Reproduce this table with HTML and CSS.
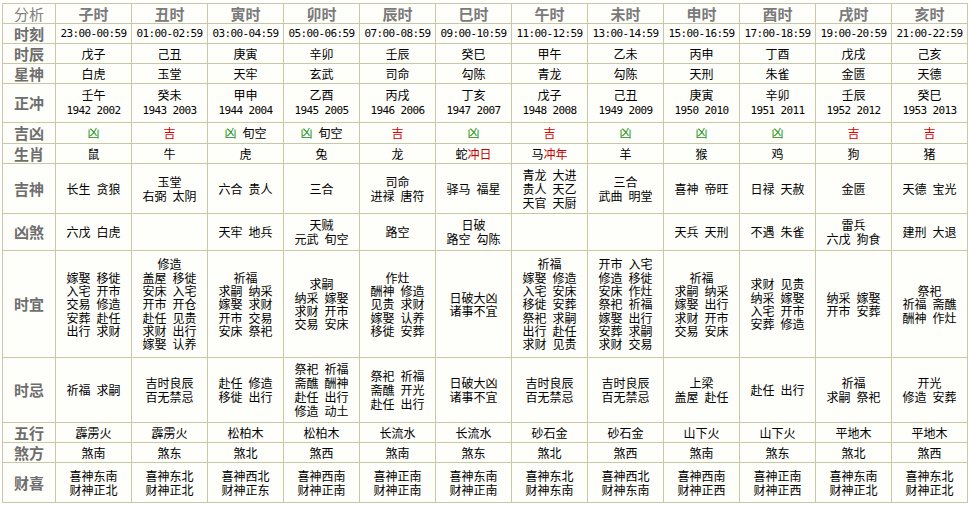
FILE: index.html
```html
<!DOCTYPE html>
<html lang="zh">
<head>
<meta charset="utf-8">
<title>时辰分析</title>
<link rel="stylesheet" href="styles.css">
</head>
<body>
<table class="almanac">
<colgroup><col class="lab"><col class="c"><col class="c"><col class="c"><col class="c"><col class="c"><col class="c"><col class="c"><col class="c"><col class="c"><col class="c"><col class="c"><col class="c"></colgroup>
<tr class="r20 head">
<td class="corner">分析</td><td>子时</td><td>丑时</td><td>寅时</td><td>卯时</td><td>辰时</td><td>巳时</td><td>午时</td><td>未时</td><td>申时</td><td>酉时</td><td>戌时</td><td>亥时</td>
</tr>
<tr class="r20 mono">
<td class="label">时刻</td><td>23:00-00:59</td><td>01:00-02:59</td><td>03:00-04:59</td><td>05:00-06:59</td><td>07:00-08:59</td><td>09:00-10:59</td><td>11:00-12:59</td><td>13:00-14:59</td><td>15:00-16:59</td><td>17:00-18:59</td><td>19:00-20:59</td><td>21:00-22:59</td>
</tr>
<tr class="r20">
<td class="label">时辰</td><td>戊子</td><td>己丑</td><td>庚寅</td><td>辛卯</td><td>壬辰</td><td>癸巳</td><td>甲午</td><td>乙未</td><td>丙申</td><td>丁酉</td><td>戊戌</td><td>己亥</td>
</tr>
<tr class="r20">
<td class="label">星神</td><td>白虎</td><td>玉堂</td><td>天牢</td><td>玄武</td><td>司命</td><td>勾陈</td><td>青龙</td><td>勾陈</td><td>天刑</td><td>朱雀</td><td>金匮</td><td>天德</td>
</tr>
<tr class="r39">
<td class="label">正冲</td>
<td>壬午<br><span class="num">1942 2002</span></td>
<td>癸未<br><span class="num">1943 2003</span></td>
<td>甲申<br><span class="num">1944 2004</span></td>
<td>乙酉<br><span class="num">1945 2005</span></td>
<td>丙戌<br><span class="num">1946 2006</span></td>
<td>丁亥<br><span class="num">1947 2007</span></td>
<td>戊子<br><span class="num">1948 2008</span></td>
<td>己丑<br><span class="num">1949 2009</span></td>
<td>庚寅<br><span class="num">1950 2010</span></td>
<td>辛卯<br><span class="num">1951 2011</span></td>
<td>壬辰<br><span class="num">1952 2012</span></td>
<td>癸巳<br><span class="num">1953 2013</span></td>
</tr>
<tr class="r21">
<td class="label">吉凶</td>
<td><span class="xiong">凶</span></td>
<td><span class="ji">吉</span></td>
<td><span class="xiong">凶</span> 旬空</td>
<td><span class="xiong">凶</span> 旬空</td>
<td><span class="ji">吉</span></td>
<td><span class="xiong">凶</span></td>
<td><span class="ji">吉</span></td>
<td><span class="xiong">凶</span></td>
<td><span class="xiong">凶</span></td>
<td><span class="xiong">凶</span></td>
<td><span class="ji">吉</span></td>
<td><span class="ji">吉</span></td>
</tr>
<tr class="r20">
<td class="label">生肖</td><td>鼠</td><td>牛</td><td>虎</td><td>兔</td><td>龙</td><td>蛇<span class="chong">冲日</span></td><td>马<span class="chong">冲年</span></td><td>羊</td><td>猴</td><td>鸡</td><td>狗</td><td>猪</td>
</tr>
<tr class="r50">
<td class="label">吉神</td>
<td>长生 贪狼</td>
<td>玉堂<br>右弼 太阴</td>
<td>六合 贵人</td>
<td>三合</td>
<td>司命<br>进禄 唐符</td>
<td>驿马 福星</td>
<td>青龙 大进<br>贵人 天乙<br>天官 天厨</td>
<td>三合<br>武曲 明堂</td>
<td>喜神 帝旺</td>
<td>日禄 天赦</td>
<td>金匮</td>
<td>天德 宝光</td>
</tr>
<tr class="r37">
<td class="label">凶煞</td>
<td>六戊 白虎</td>
<td></td>
<td>天牢 地兵</td>
<td>天贼<br>元武 旬空</td>
<td>路空</td>
<td>日破<br>路空 勾陈</td>
<td></td>
<td></td>
<td>天兵 天刑</td>
<td>不遇 朱雀</td>
<td>雷兵<br>六戊 狗食</td>
<td>建刑 大退</td>
</tr>
<tr class="r107 dense">
<td class="label">时宜</td>
<td>嫁娶 移徙<br>入宅 开市<br>交易 修造<br>安葬 赴任<br>出行 求财</td>
<td>修造<br>盖屋 移徙<br>安床 入宅<br>开市 开仓<br>赴任 见贵<br>求财 出行<br>嫁娶 认养</td>
<td>祈福<br>求嗣 纳采<br>嫁娶 求财<br>开市 交易<br>安床 祭祀</td>
<td>求嗣<br>纳采 嫁娶<br>求财 开市<br>交易 安床</td>
<td>作灶<br>酬神 修造<br>见贵 求财<br>嫁娶 认养<br>移徙 安葬</td>
<td>日破大凶<br>诸事不宜</td>
<td>祈福<br>嫁娶 修造<br>入宅 安床<br>移徙 安葬<br>祭祀 求嗣<br>出行 赴任<br>求财 见贵</td>
<td>开市 入宅<br>修造 移徙<br>安床 作灶<br>祭祀 祈福<br>嫁娶 出行<br>安葬 求嗣<br>求财 交易</td>
<td>祈福<br>求嗣 纳采<br>嫁娶 出行<br>求财 开市<br>交易 安床</td>
<td>求财 见贵<br>纳采 嫁娶<br>入宅 开市<br>安葬 修造</td>
<td>纳采 嫁娶<br>开市 安葬</td>
<td>祭祀<br>祈福 斋醮<br>酬神 作灶</td>
</tr>
<tr class="r65">
<td class="label">时忌</td>
<td>祈福 求嗣</td>
<td>吉时良辰<br>百无禁忌</td>
<td>赴任 修造<br>移徙 出行</td>
<td>祭祀 祈福<br>斋醮 酬神<br>赴任 出行<br>修造 动土</td>
<td>祭祀 祈福<br>斋醮 开光<br>赴任 出行</td>
<td>日破大凶<br>诸事不宜</td>
<td>吉时良辰<br>百无禁忌</td>
<td>吉时良辰<br>百无禁忌</td>
<td>上梁<br>盖屋 赴任</td>
<td>赴任 出行</td>
<td>祈福<br>求嗣 祭祀</td>
<td>开光<br>修造 安葬</td>
</tr>
<tr class="r20">
<td class="label">五行</td><td>霹雳火</td><td>霹雳火</td><td>松柏木</td><td>松柏木</td><td>长流水</td><td>长流水</td><td>砂石金</td><td>砂石金</td><td>山下火</td><td>山下火</td><td>平地木</td><td>平地木</td>
</tr>
<tr class="r20">
<td class="label">煞方</td><td>煞南</td><td>煞东</td><td>煞北</td><td>煞西</td><td>煞南</td><td>煞东</td><td>煞北</td><td>煞西</td><td>煞南</td><td>煞东</td><td>煞北</td><td>煞西</td>
</tr>
<tr class="r40">
<td class="label">财喜</td>
<td>喜神东南<br>财神正北</td>
<td>喜神东北<br>财神正北</td>
<td>喜神西北<br>财神正东</td>
<td>喜神西南<br>财神正南</td>
<td>喜神正南<br>财神正南</td>
<td>喜神东南<br>财神正南</td>
<td>喜神东北<br>财神东南</td>
<td>喜神西北<br>财神东南</td>
<td>喜神西南<br>财神正西</td>
<td>喜神正南<br>财神正西</td>
<td>喜神东南<br>财神正北</td>
<td>喜神东北<br>财神正北</td>
</tr>
</table>
</body>
</html>
```
FILE: styles.css
```css
html, body {
  margin: 0;
  background: #ffffff;
}
body {
  padding: 3px 0 0 2px;
  font-family: "Noto Sans CJK SC", "Noto Sans", sans-serif;
  font-size: 12px;
  color: #000;
}
.almanac {
  border-collapse: collapse;
  table-layout: fixed;
  width: 966px;
}
.almanac col.lab { width: 53px; }
.almanac col.c { width: 76px; }
.almanac td {
  border: 1px solid #c8c8a6;
  background: #fefefa;
  padding: 0;
  text-align: center;
  vertical-align: middle;
  line-height: 14px;
  white-space: nowrap;
  overflow: hidden;
  word-spacing: 3.5px;
}
.almanac .head td {
  font-size: 15px;
  font-weight: bold;
  color: #7a7a7a;
}
.almanac .head td.corner {
  font-weight: normal;
  color: #808080;
  font-size: 15px;
}
.almanac td.label {
  font-size: 15px;
  font-weight: bold;
  color: #6e6e6e;
}
.almanac .mono td:not(.label),
.num {
  font-family: "DejaVu Sans Mono", "Liberation Mono", monospace;
  font-size: 11px;
  letter-spacing: -0.62px;
  word-spacing: 0;
}
.almanac .dense td:not(.label) { line-height: 13.33px; }
.xiong { color: #1a8f1a; }
.ji { color: #dd0000; }
.chong { color: #c40000; }
.r20 td { height: 19px; }
.r21 td { height: 20px; }
.r37 td { height: 36px; }
.r39 td { height: 38px; }
.r40 td { height: 39px; }
.r50 td { height: 49px; }
.r65 td { height: 64px; }
.r107 td { height: 106px; }
```
